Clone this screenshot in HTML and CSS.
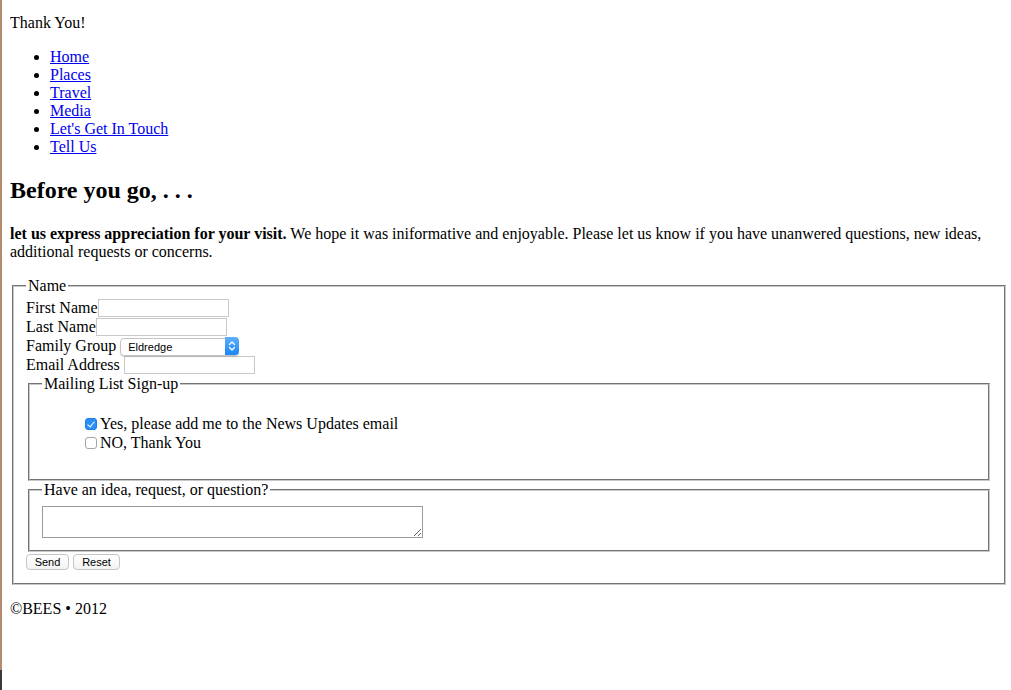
FILE: index.html
```html
<!DOCTYPE html>
<html lang="en">
<head>
<meta charset="utf-8">
<title>Thank You</title>
<link rel="stylesheet" href="styles.css">
</head>
<body>
<p class="thanks">Thank You!</p>
<ul class="nav">
  <li><a href="#">Home</a></li>
  <li><a href="#">Places</a></li>
  <li><a href="#">Travel</a></li>
  <li><a href="#">Media</a></li>
  <li><a href="#">Let's Get In Touch</a></li>
  <li><a href="#">Tell Us</a></li>
</ul>
<h2 class="title">Before you go, . . .</h2>
<p class="intro"><strong>let us express appreciation for your visit.</strong> We hope it was iniformative and enjoyable. Please let us know if you have unanwered questions, new ideas, additional requests or concerns.</p>
<form class="form">
  <fieldset class="outer">
    <legend>Name</legend>
    <div class="row"><label for="fn">First Name</label><input id="fn" class="txt" type="text"></div>
    <div class="row"><label for="ln">Last Name</label><input id="ln" class="txt" type="text"></div>
    <div class="row"><label for="fg">Family Group</label><span class="sel"><select id="fg"><option>Eldredge</option></select><span class="sel-arrow"><svg width="14" height="18" viewBox="0 0 14 18"><path d="M4.5 7.5 L7 5 L9.5 7.5 M4.5 10.5 L7 13 L9.5 10.5" fill="none" stroke="#fff" stroke-width="1.3" stroke-linecap="round" stroke-linejoin="round"/></svg></span></span></div>
    <div class="row"><label for="em">Email Address</label><input id="em" class="txt gap" type="text"></div>
    <fieldset class="inner mail">
      <legend>Mailing List Sign-up</legend>
      <ul class="checks">
        <li><input type="checkbox" class="cb" checked id="yes"><label for="yes">Yes, please add me to the News Updates email</label></li>
        <li><input type="checkbox" class="cb" id="no"><label for="no">NO, Thank You</label></li>
      </ul>
    </fieldset>
    <fieldset class="inner idea">
      <legend>Have an idea, request, or question?</legend>
      <textarea class="ta"></textarea>
    </fieldset>
    <div class="buttons"><button type="submit" class="btn">Send</button><button type="reset" class="btn">Reset</button></div>
  </fieldset>
</form>
<p class="footer">©BEES • 2012</p>
</body>
</html>
```
FILE: styles.css
```css
html {
  background: #fff;
  border-left: 2px solid #b58b70;
  border-image: linear-gradient(#b58b70 0, #b58b70 97%, #3a3a3a 97%) 1;
  min-height: 100%;
}
body {
  margin: 0 3px 8px 8px;
  font-family: "Liberation Serif", "Times New Roman", serif;
  font-size: 16px;
  line-height: 18px;
  color: #000;
}
.thanks { margin: 14px 0 16px; }
.nav { margin: 16px 0; padding-left: 40px; }
.nav a { color: #0000ee; }
.title {
  font-size: 24px;
  line-height: 28px;
  margin: 20px 0 21px;
}
.intro { margin: 0 0 16px; }
.form { margin: 0; }
fieldset {
  border: 2px groove #c8c8c8;
  margin: 0 2px;
}
legend { padding: 0 2px; }
.outer { padding: 3px 12px 13px; margin-top: 9px; }
.row {
  height: 19px;
  display: flex;
  align-items: center;
  white-space: nowrap;
}
.txt {
  box-sizing: border-box;
  width: 131px;
  height: 18px;
  border: 1px solid #c9c9c9;
  margin: 0;
  padding: 0 2px;
  font: 12px "Liberation Sans", sans-serif;
}
.gap { margin-left: 4px; }
.sel {
  position: relative;
  display: inline-block;
  margin-left: 4px;
  height: 18px;
}
.sel select {
  -webkit-appearance: none;
  appearance: none;
  box-sizing: border-box;
  width: 119px;
  height: 18px;
  border: 1px solid #c4c4c4;
  border-radius: 4px;
  background: #fff;
  padding: 0 0 0 7px;
  font: 11px "Liberation Sans", Arial, sans-serif;
  color: #000;
  box-shadow: 0 1px 1px rgba(0,0,0,0.12);
}
.sel-arrow {
  position: absolute;
  right: 0;
  top: 0;
  width: 14px;
  height: 18px;
  border-radius: 0 4px 4px 0;
  background: linear-gradient(#5fb0fb, #1a86f5);
}
.sel-arrow svg { display: block; }
.inner { padding: 4px 12px 10px; }
.mail { margin-top: 1px; }
.checks {
  list-style: none;
  margin: 17px 0 17px;
  padding-left: 40px;
}
.checks li {
  height: 19px;
  display: flex;
  align-items: center;
}
.cb {
  -webkit-appearance: none;
  appearance: none;
  box-sizing: border-box;
  width: 12px;
  height: 12px;
  margin: 1px 3px 0 3px;
  border: 1px solid #a5a5a5;
  border-radius: 3px;
  background: #fff;
  position: relative;
}
.cb:checked {
  background: #2b8ff5;
  border-color: #1f7ee6;
}
.cb:checked::after {
  content: "";
  position: absolute;
  left: 3px;
  top: 1px;
  width: 3px;
  height: 6px;
  border: solid #fff;
  border-width: 0 1.6px 1.6px 0;
  transform: rotate(40deg);
}
.idea { padding-top: 7px; padding-bottom: 12px; }
.ta {
  box-sizing: border-box;
  width: 381px;
  height: 32px;
  border: 1px solid #9a9a9a;
  margin: 0;
  display: block;
}
.buttons {
  display: flex;
  gap: 4px;
  margin-top: 2px;
}
.btn {
  box-sizing: border-box;
  height: 16px;
  padding: 0 7px;
  border: 1px solid #c6c6c6;
  border-radius: 4px;
  background: linear-gradient(#fff, #f3f3f3);
  font: 11px "Liberation Sans", Arial, sans-serif;
  line-height: 14px;
  color: #000;
}
.btn:first-child { width: 43px; }
.btn:last-child { width: 47px; }
.footer { margin: 15px 0 0; }
```
